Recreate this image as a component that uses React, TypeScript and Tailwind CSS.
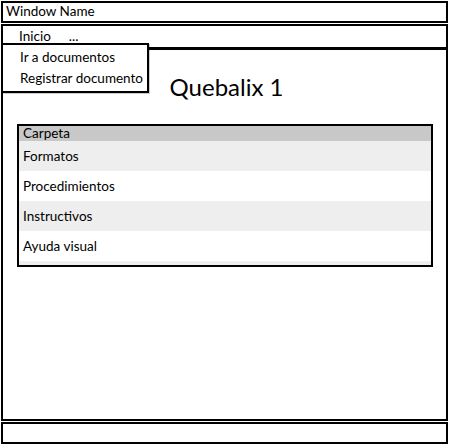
import React from 'react';

const rows = ['Formatos', 'Procedimientos', 'Instructivos', 'Ayuda visual'];

const App: React.FC = () => {
    return (
        <div className="w-[450px] h-[445px] bg-white relative text-black" style={{ fontFamily: 'Lato, "Open Sans", sans-serif' }}>
            <div className="absolute left-[1px] top-[1px] w-[447px] h-[443px] flex flex-col">
                <div className="h-[22px] border-2 border-black px-[3px] flex items-center text-[13.5px] leading-none">
                    Window Name
                </div>
                <div className="h-[25px] mt-[1px] border-2 border-black flex items-center text-[13.5px] leading-none">
                    <span className="ml-[16px]">Inicio</span>
                    <span className="ml-[18px]">...</span>
                </div>
                <div className="flex-1 border-2 border-t-[1px] border-black flex flex-col">
                    <h1 className="mt-[22px] text-center text-[24px] leading-[30px] pl-[4px]">Quebalix 1</h1>
                    <div className="mt-[22px] ml-[14px] w-[416px] border-2 border-black bg-[#eeeeee] text-[13.5px] pb-[4px]">
                        <div className="h-[15px] bg-[#c8c8c8] px-[4px] flex items-center leading-none">Carpeta</div>
                        {rows.map((r, i) => (
                            <div key={r} className={`h-[30px] px-[4px] flex items-center ${i % 2 === 0 ? 'bg-[#eeeeee]' : 'bg-white'}`}>
                                {r}
                            </div>
                        ))}
                    </div>
                </div>
                <div className="h-[22px] mt-[1px] border-2 border-black"></div>
            </div>

            <div className="absolute left-[1px] top-[43px] w-[148px] h-[50px] border-2 border-black bg-white text-[13.5px] leading-none flex flex-col justify-center gap-[8px] pl-[17px] shadow-[1px_1px_0_rgba(0,0,0,0.2)]">
                <span>Ir a documentos</span>
                <span>Registrar documento</span>
            </div>
        </div>
    );
};

export default App;
